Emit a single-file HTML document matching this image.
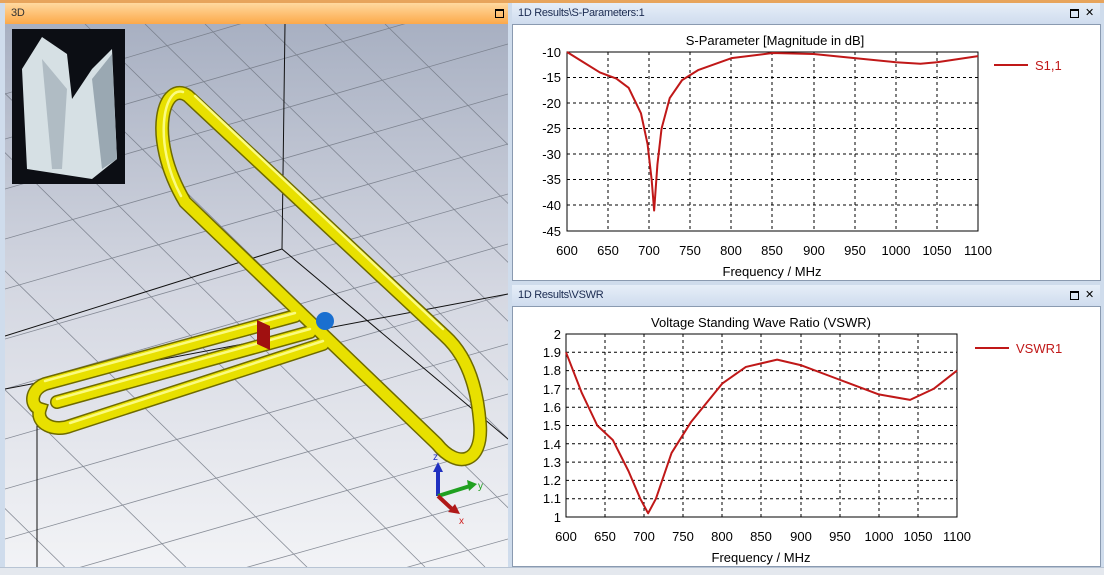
<!DOCTYPE html><html><head><style>
*{margin:0;padding:0;box-sizing:border-box}
html,body{width:1104px;height:575px;overflow:hidden}
body{background:#cfdcec;font-family:"Liberation Sans",sans-serif;position:relative}
.tb{position:absolute;height:21px;font-size:11px;line-height:21px;padding-left:6px;color:#1a2a50;letter-spacing:-0.3px}
.t3{left:5px;top:3px;width:503px;background:linear-gradient(#ffd9a0,#fca94a);color:#333}
.tr{background:linear-gradient(#e6eef8,#cfdcee)}
.ic{position:absolute;top:5px;font-size:11px;line-height:11px;color:#000}
.sq{position:absolute;top:6px;width:9px;height:9px;border:1.5px solid #000;border-top-width:2.5px}
.pl{position:absolute;background:#fff;border:1px solid #8a9ab0}
svg{display:block}
svg text{font-family:"Liberation Sans",sans-serif}
</style></head><body>
<div style="position:absolute;left:0;top:0;width:1104px;height:3px;background:#e7a45c"></div>
<div class="tb t3">3D<div class="sq" style="left:490px"></div></div>
<div style="position:absolute;left:5px;top:24px;width:503px;height:543px;background:linear-gradient(#a8b0c2,#d5d8e2 50%,#f2f3f6);overflow:hidden">
<svg width="503" height="543" style="position:absolute;left:0;top:0">
<g stroke="#707682" stroke-width="0.8" fill="none" opacity="0.8">
<line x1="0" y1="70" x2="503" y2="-80"/><line x1="0" y1="115" x2="503" y2="-30"/><line x1="0" y1="165" x2="503" y2="20"/><line x1="0" y1="215" x2="503" y2="70"/><line x1="0" y1="265" x2="503" y2="120"/><line x1="0" y1="315" x2="503" y2="170"/><line x1="0" y1="365" x2="503" y2="220"/><line x1="0" y1="415" x2="503" y2="270"/><line x1="0" y1="465" x2="503" y2="320"/><line x1="0" y1="515" x2="503" y2="370"/><line x1="0" y1="565" x2="503" y2="420"/><line x1="40" y1="600" x2="503" y2="470"/><line x1="200" y1="600" x2="503" y2="515"/>
<line x1="-100" y1="30" x2="420" y2="543"/><line x1="-40" y1="30" x2="480" y2="543"/><line x1="20" y1="10" x2="540" y2="520"/><line x1="80" y1="0" x2="600" y2="510"/><line x1="140" y1="0" x2="660" y2="510"/><line x1="200" y1="0" x2="720" y2="510"/><line x1="260" y1="0" x2="780" y2="510"/><line x1="320" y1="0" x2="840" y2="510"/><line x1="380" y1="0" x2="900" y2="510"/><line x1="-160" y1="90" x2="360" y2="600"/><line x1="-220" y1="150" x2="300" y2="660"/><line x1="-280" y1="210" x2="240" y2="720"/><line x1="-340" y1="270" x2="180" y2="780"/><line x1="-400" y1="330" x2="120" y2="840"/>
</g>
<g stroke="#111" stroke-width="1" fill="none">
<polyline points="280,0 277,225 0,312"/><line x1="277" y1="225" x2="503" y2="415"/><line x1="32" y1="372" x2="32" y2="543"/><line x1="0" y1="365" x2="503" y2="270"/>
</g>
<g fill="none" stroke-linecap="round">
<g stroke="#6e6a00" stroke-width="14">
<path d="M440,312 L183,72 C160,55 140,110 180,178 L432,420 C452,445 478,440 475,400 C472,360 460,330 440,312"/>
<path d="M40,360 L290,292 M52,378 L305,308 M40,360 C25,366 25,382 35,385 C30,400 50,408 65,402 L318,320"/>
</g>
<g stroke="#e8e000" stroke-width="11">
<path d="M440,312 L183,72 C160,55 140,110 180,178 L432,420 C452,445 478,440 475,400 C472,360 460,330 440,312"/>
<path d="M40,360 L290,292 M52,378 L305,308 M40,360 C25,366 25,382 35,385 C30,400 50,408 65,402 L318,320"/>
</g>
<g stroke="#fbfb80" stroke-width="2.5">
<path d="M178,68 C158,62 148,120 176,172 M190,72 L438,305"/>
<path d="M40,357 L290,289 M52,375 L305,305 M65,399 L318,317"/>
</g>
</g>
<circle cx="320" cy="297" r="9" fill="#1a6fd0"/>
<polygon points="252,296 265,302 265,326 252,320" fill="#a01010"/>
<line x1="433" y1="472" x2="433" y2="445" stroke="#2030c0" stroke-width="4"/><polygon points="428,448 438,448 433,438" fill="#2030c0"/>
<line x1="433" y1="472" x2="465" y2="462" stroke="#20a020" stroke-width="4"/><polygon points="462,456 472,460 464,467" fill="#20a020"/>
<line x1="433" y1="472" x2="448" y2="486" stroke="#b01818" stroke-width="4"/><polygon points="443,488 455,490 450,480" fill="#b01818"/>
<text x="428" y="436" font-size="10" fill="#2030c0">z</text><text x="473" y="465" font-size="10" fill="#20a020">y</text><text x="454" y="500" font-size="10" fill="#d02020">x</text>
</svg>
<div style="position:absolute;left:7px;top:5px;width:113px;height:155px;background:#0c0e14">
<svg width="113" height="155"><path d="M10,40 L30,8 L55,25 L60,70 L80,40 L100,20 L105,130 L80,150 L15,140 Z" fill="#d6e0e4"/><path d="M30,30 L40,140 L50,140 L55,60 Z" fill="#b0bcc4"/><path d="M80,50 L90,140 L105,130 L100,25 Z" fill="#9aa8b2"/></svg>
</div>
</div>
<div class="tb tr" style="left:512px;top:3px;width:588px">1D Results\S-Parameters:1<div class="sq" style="left:558px"></div><div class="ic" style="left:573px">✕</div></div>
<div class="pl" style="left:512px;top:24px;width:589px;height:257px"></div>
<div class="tb tr" style="left:512px;top:285px;width:588px">1D Results\VSWR<div class="sq" style="left:558px"></div><div class="ic" style="left:573px">✕</div></div>
<div class="pl" style="left:512px;top:306px;width:589px;height:261px"></div>
<svg width="1104" height="575" style="position:absolute;left:0;top:0">
<text x="775" y="45" font-size="13" text-anchor="middle">S-Parameter [Magnitude in dB]</text>
<g stroke="#000" stroke-dasharray="3,3" stroke-width="1">
<path d="M608,52V231M649,52V231M690,52V231M731,52V231M772,52V231M814,52V231M855,52V231M896,52V231M937,52V231M567,77.5H978M567,103H978M567,128.5H978M567,154H978M567,179.5H978M567,205H978"/>
</g>
<rect x="567" y="52" width="411" height="179" fill="none" stroke="#000"/>
<g font-size="13" text-anchor="end"><text x="561" y="57">-10</text><text x="561" y="82">-15</text><text x="561" y="108">-20</text><text x="561" y="133">-25</text><text x="561" y="159">-30</text><text x="561" y="184">-35</text><text x="561" y="210">-40</text><text x="561" y="236">-45</text></g>
<g font-size="13" text-anchor="middle"><text x="567" y="255">600</text><text x="608" y="255">650</text><text x="649" y="255">700</text><text x="690" y="255">750</text><text x="731" y="255">800</text><text x="772" y="255">850</text><text x="814" y="255">900</text><text x="855" y="255">950</text><text x="896" y="255">1000</text><text x="937" y="255">1050</text><text x="978" y="255">1100</text></g>
<text x="772" y="276" font-size="13" text-anchor="middle">Frequency / MHz</text>
<g transform="translate(567,52) scale(0.822,5.114)"><path d="M0,0 L20,2 L40,4 L60,5.2 L75,7 L90,12 L98,18 L103,25 L106,31 L110,22 L115,15 L125,9 L140,5.5 L160,3.5 L200,1.2 L250,0.2 L300,0.4 L350,1.2 L400,2 L430,2.3 L450,2 L500,0.8" fill="none" stroke="#c01818" stroke-width="2" vector-effect="non-scaling-stroke" stroke-linejoin="round"/></g>
<line x1="994" y1="65" x2="1028" y2="65" stroke="#c01818" stroke-width="2"/><text x="1035" y="70" font-size="13" fill="#c01818">S1,1</text>
<text x="761" y="327" font-size="13" text-anchor="middle">Voltage Standing Wave Ratio (VSWR)</text>
<g stroke="#000" stroke-dasharray="3,3" stroke-width="1">
<path d="M605,334V517M644,334V517M683,334V517M722,334V517M761,334V517M801,334V517M840,334V517M879,334V517M918,334V517M566,352.3H957M566,370.6H957M566,388.9H957M566,407.2H957M566,425.5H957M566,443.8H957M566,462.1H957M566,480.4H957M566,498.7H957"/>
</g>
<rect x="566" y="334" width="391" height="183" fill="none" stroke="#000"/>
<g font-size="13" text-anchor="end"><text x="561" y="339">2</text><text x="561" y="357">1.9</text><text x="561" y="375">1.8</text><text x="561" y="394">1.7</text><text x="561" y="412">1.6</text><text x="561" y="430">1.5</text><text x="561" y="449">1.4</text><text x="561" y="467">1.3</text><text x="561" y="485">1.2</text><text x="561" y="503">1.1</text><text x="561" y="522">1</text></g>
<g font-size="13" text-anchor="middle"><text x="566" y="541">600</text><text x="605" y="541">650</text><text x="644" y="541">700</text><text x="683" y="541">750</text><text x="722" y="541">800</text><text x="761" y="541">850</text><text x="801" y="541">900</text><text x="840" y="541">950</text><text x="879" y="541">1000</text><text x="918" y="541">1050</text><text x="957" y="541">1100</text></g>
<text x="761" y="562" font-size="13" text-anchor="middle">Frequency / MHz</text>
<g transform="translate(566,334) scale(0.782,183)"><path d="M0,0.1 L20,0.32 L40,0.5 L60,0.58 L80,0.75 L95,0.9 L105,0.98 L115,0.9 L135,0.65 L160,0.48 L200,0.27 L230,0.18 L270,0.14 L300,0.17 L350,0.25 L400,0.33 L440,0.36 L470,0.3 L500,0.2" fill="none" stroke="#c01818" stroke-width="2" vector-effect="non-scaling-stroke" stroke-linejoin="round"/></g>
<line x1="975" y1="348" x2="1009" y2="348" stroke="#c01818" stroke-width="2"/><text x="1016" y="353" font-size="13" fill="#c01818">VSWR1</text>
</svg>
<div style="position:absolute;left:0;top:567px;width:1104px;height:8px;background:#e4e8ee;border-top:1px solid #b8c4d4"></div>
</body></html>
